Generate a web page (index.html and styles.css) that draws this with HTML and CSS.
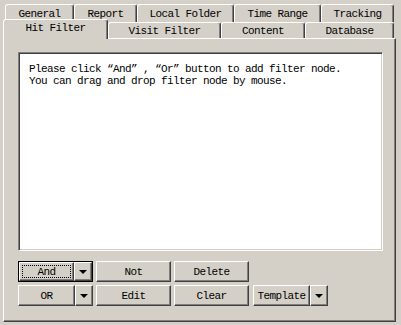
FILE: index.html
```html
<!DOCTYPE html>
<html lang="en">
<head>
  <meta charset="UTF-8">
  <title>Hit Filter</title>
  <link rel="stylesheet" href="styles.css">
</head>
<body>
  <div class="tabs">
    <div class="tab-row back">
      <div class="tab w-general">General</div>
      <div class="tab w-report">Report</div>
      <div class="tab w-local">Local Folder</div>
      <div class="tab w-time">Time Range</div>
      <div class="tab w-tracking">Tracking</div>
    </div>
    <div class="tab-row front">
      <div class="tab selected w-hit">Hit Filter</div>
      <div class="tab w-visit">Visit Filter</div>
      <div class="tab w-content">Content</div>
      <div class="tab w-database">Database</div>
    </div>
  </div>
  <div class="panel">
    <div class="editor">
      <div>Please click “And” , “Or” button to add filter node.</div>
      <div>You can drag and drop filter node by mouse.</div>
    </div>
    <div class="buttons">
      <div class="btn-row">
        <div class="split default">
          <div class="btn main"><span class="focus">And</span></div>
          <div class="btn arrow"><i class="tri"></i></div>
        </div>
        <div class="btn">Not</div>
        <div class="btn">Delete</div>
      </div>
      <div class="btn-row">
        <div class="split">
          <div class="btn main">OR</div>
          <div class="btn arrow"><i class="tri"></i></div>
        </div>
        <div class="btn">Edit</div>
        <div class="btn">Clear</div>
        <div class="split template">
          <div class="btn main">Template</div>
          <div class="btn arrow"><i class="tri"></i></div>
        </div>
      </div>
    </div>
  </div>
</body>
</html>
```

FILE: styles.css
```css
body {
  margin: 0;
  background: #d4d0c8;
  font-family: "Liberation Mono", monospace;
  font-size: 11px;
  letter-spacing: -0.6px;
  color: #000;
}

.tabs {
  padding-top: 4px;
}

.tab-row {
  display: flex;
}

.tab-row.back {
  margin-left: 5px;
  height: 18px;
}

.tab-row.front {
  margin-top: -3px;
  margin-left: 3px;
  height: 19px;
  align-items: flex-end;
}

.tab {
  box-sizing: border-box;
  height: 100%;
  display: flex;
  align-items: center;
  justify-content: center;
  border: 1px solid;
  border-bottom: none;
  border-color: #fff #404040 #fff #fff;
  border-radius: 3px 3px 0 0;
  box-shadow: inset -1px 0 #808080;
  background: #d4d0c8;
}

.tab-row.front .tab {
  height: 16px;
}

.tab-row.front .tab.selected {
  height: 20px;
  margin-bottom: -1px;
  padding-bottom: 3px;
  position: relative;
  z-index: 1;
}

.w-general { width: 69px; }
.w-report { width: 63px; }
.w-local { width: 97px; }
.w-time { width: 87px; }
.w-tracking { width: 73px; }
.w-hit { width: 105px; }
.w-visit { width: 113px; }
.w-content { width: 84px; }
.w-database { width: 89px; }

.panel {
  box-sizing: border-box;
  margin-left: 3px;
  width: 393px;
  height: 284px;
  padding: 13px 0 0 14px;
  border: 1px solid;
  border-color: #fff #404040 #404040 #fff;
  box-shadow: inset -1px -1px #808080;
}

.editor {
  box-sizing: border-box;
  width: 365px;
  height: 199px;
  padding: 10px 10px;
  background: #fff;
  border: 1px solid;
  border-color: #808080 #fff #fff #808080;
  box-shadow: inset 1px 1px #404040, inset -1px -1px #d4d0c8;
  line-height: 12px;
}

.buttons {
  margin-top: 10px;
  display: flex;
  flex-direction: column;
  gap: 3px;
}

.btn-row {
  display: flex;
  gap: 3px;
  height: 21px;
}

.btn {
  box-sizing: border-box;
  width: 75px;
  height: 100%;
  display: flex;
  align-items: center;
  justify-content: center;
  border: 1px solid;
  border-color: #fff #404040 #404040 #fff;
  box-shadow: inset -1px -1px #808080;
  background: #d4d0c8;
}

.split {
  box-sizing: border-box;
  width: 75px;
  display: flex;
}

.split.template {
  margin-left: 1px;
}

.split .main {
  flex: 1;
  width: auto;
}

.split .arrow {
  width: 18px;
}

.split.default {
  border: 1px solid #000;
}

.split.default .main {
  padding: 2px;
}

.focus {
  box-sizing: border-box;
  flex: 1;
  align-self: stretch;
  display: flex;
  align-items: center;
  justify-content: center;
  border: 1px dotted #000;
}

.tri {
  width: 0;
  height: 0;
  border-left: 4px solid transparent;
  border-right: 4px solid transparent;
  border-top: 4px solid #000;
}
```
